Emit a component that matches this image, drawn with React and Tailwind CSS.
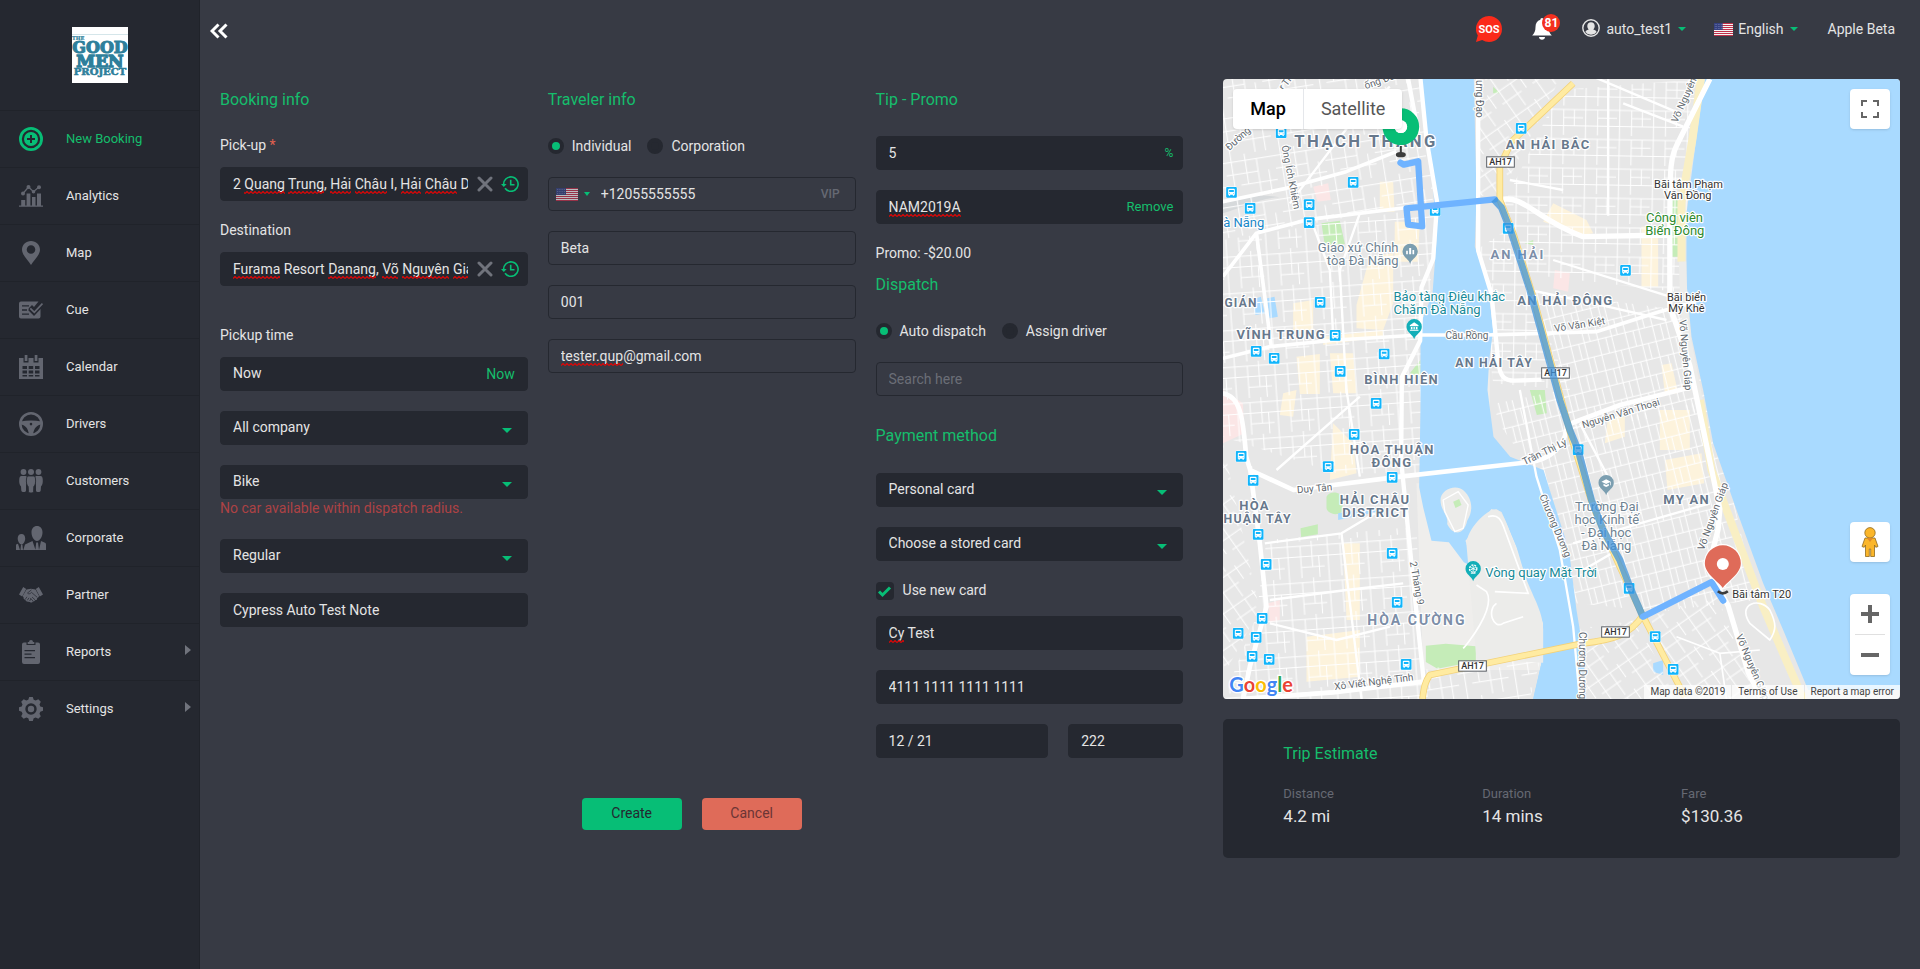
import React from "react";

/* ---------- sidebar icons ---------- */

const NewBookingIcon = () => (
  <svg viewBox="0 0 24 24" className="size-6 fill-current">
    <circle cx="12" cy="12" r="10.6" fill="none" stroke="currentColor" strokeWidth="2.8" />
    <path fillRule="evenodd" d="M12 5a7 7 0 1 0 0 14a7 7 0 1 0 0-14zM11 8h2v3h3v2h-3v3h-2v-3H8v-2h3z" />
  </svg>
);
const AnalyticsIcon = () => (
  <svg viewBox="0 0 24 24" className="size-6 fill-current">
    <path d="M0 21.5h24v1.2H0zM2.2 16h4v5.5h-4zM7.6 9.500h3.800v12H7.600zM13 13h3.500v8.500H13zM18 9.500h4v12h-4z" />
    <path d="M4 9.500L9.500 3l5 4.800L20 3" fill="none" stroke="currentColor" strokeWidth="1.200" />
    <circle cx="4" cy="9.500" r="2" />
    <circle cx="9.500" cy="3" r="2" />
    <circle cx="14.500" cy="7.800" r="1.800" />
    <circle cx="20" cy="3.200" r="2" />
  </svg>
);
const MapIcon = () => (
  <svg viewBox="0 0 24 24" className="size-6 fill-current">
    <path fillRule="evenodd" d="M12 0c5 0 9 3.800 9 8.800C21 14 15 19 12 24C9 19 3 14 3 8.800C3 3.800 7 0 12 0zM12 4.200a4.300 4.300 0 1 0 0 8.600a4.300 4.300 0 1 0 0-8.600z" />
  </svg>
);
const CueIcon = () => (
  <svg viewBox="0 0 24 24" className="size-6 fill-current">
    <path d="M2 3.500h17.500L15 9l-2-2l-3.500 3.500l6 6.500L21.500 10v8.500a2 2 0 0 1-2 2H2a2 2 0 0 1-2-2v-13a2 2 0 0 1 2-2z" />
    <path d="M3 7.800h7M3 12h5M3 16.200h7" stroke="#252830" strokeWidth="1.300" fill="none" />
    <path d="M10.500 10.500l4.500 4.700L23.500 6" fill="none" stroke="#252830" strokeWidth="4" />
    <path d="M11.300 10.300l4 4L23.500 5.500" fill="none" stroke="currentColor" strokeWidth="1.800" />
  </svg>
);
const CalendarIcon = () => (
  <svg viewBox="0 0 24 24" className="size-6 fill-current">
    <path fillRule="evenodd" d="M0 3h4.500v4.500h5V3h5v4.500h5V3H24v21H0zM3.500 11h4.500v3H3.500zM9.700 11h4.500v3H9.700zM16 11h4.500v3H16zM3.500 15.500h4.500v3H3.500zM9.700 15.500h4.500v3H9.700zM16 15.500h4.500v3H16zM3.500 20h4.500v1.500H3.500zM9.700 20h4.500v1.500H9.700zM16 20h4.500v1.500H16z" />
    <path d="M5.700 0h2.700v6H5.700zM15.700 0h2.700v6h-2.700z" />
  </svg>
);
const DriversIcon = () => (
  <svg viewBox="0 0 24 24" className="size-6 fill-current">
    <circle cx="12" cy="12" r="10.700" fill="none" stroke="currentColor" strokeWidth="2.600" />
    <path fillRule="evenodd" d="M1.500 9.500C8 8 16 8 22.500 9.500v3C18 13 15 16 14 22.500h-4C9 16 6 13 1.500 12.500zM12 10.800a1.300 1.300 0 1 0 0 2.600a1.300 1.300 0 1 0 0-2.600z" />
    <path d="M5 14.500c2 1.200 3 3 3.400 5C6.500 18.500 5.300 16.700 5 14.500zM19 14.500c-2 1.200-3 3-3.400 5c1.900-1 3.100-2.800 3.400-5z" fill="#252830" />
  </svg>
);
const CustomersIcon = () => (
  <svg viewBox="0 0 24 24" className="size-6 fill-current">
    <circle cx="4.500" cy="3" r="2.900" />
    <circle cx="19.500" cy="3" r="2.900" />
    <path d="M2.500 7h4.200c1 0 1.300 1 1 2L7 13v8.500c0 2-4.500 2-4.700 0L2 17.500C.3 16 0 13 .3 10C.5 8 1 7 2.500 7zM21.500 7h-4.200c-1 0-1.300 1-1 2l.7 4v8.500c0 2 4.500 2 4.700 0l.3-4c1.700-1.500 2-4.500 1.700-7.500c-.2-2-.7-3-2.200-3z" />
    <path d="M9.700 7h4.600c1.400 0 2 1.200 2.200 3c.3 3 0 6-1.700 7.500l-.3 5c-.2 2-4.800 2-5 0l-.3-5C7.500 16 7.200 13 7.500 10c.2-1.800.8-3 2.200-3z" stroke="#252830" strokeWidth=".8" />
    <circle cx="12" cy="3" r="3" />
  </svg>
);
const CorporateIcon = () => (
  <svg viewBox="0 0 30 24" className="h-6 w-[30px] fill-current">
    <path d="M21 0c3.300 0 5.500 2.500 5.500 6.500S24 15 21 15s-5.500-4.500-5.500-8.500S17.700 0 21 0zM5.500 8C8 8 9.200 9.800 9.200 12.500S7.500 18.500 5.500 18.500S1.700 15.200 1.700 12.500S3 8 5.500 8z" />
    <path d="M0 24v-5c0-.7 1-1 2-1.300L4 24zM5 18.500h1.400l.6 5.500H4.500zM7.300 24l1.700-5.500l7.500-3.500l3 9zM20.200 16.500h1.800L23 24h-3.600zM23 24l2-9l4 1.800c.7.400 1 1 1 2V24z" />
  </svg>
);
const PartnerIcon = () => (
  <svg viewBox="0 0 24 24" className="size-6 fill-current">
    <path d="M4.200 4L0 11.500l3.200 2L7.200 6zM19.800 4L24 11.500l-3.200 2L16.800 6z" />
    <path d="M7.500 6.500L12 5.800l4.500.7l3.600 6.500c-.8 1.500-1.500 2-2.100 2.500c.3 1.300-.8 2-1.900 1.600c-.2 1.200-1.200 1.600-2.200 1.200c-.3 1.200-1.800 1.700-3.100.7l-3-.5c-1-.5-1.600-1.200-1.300-2c-1.300.2-2.200-.8-1.800-1.800l-1-1.700z" />
    <path d="M12.500 6.800L8.500 10c.8 1.300 2.600 1 4-.6l5.800 5M8 13.800l-1.700 2.400M10 14.800l-1.700 2.500M12 15.800L10.600 18M13 14l3 2.800M11.200 15l2.800 3" fill="none" stroke="#252830" strokeWidth=".7" />
  </svg>
);
const ReportsIcon = () => (
  <svg viewBox="0 0 24 24" className="size-6 fill-current">
    <path d="M5 2.500h2.500V5h9V2.500H19a2 2 0 0 1 2 2V22a2 2 0 0 1-2 2H5a2 2 0 0 1-2-2V4.500a2 2 0 0 1 2-2z" />
    <path d="M8.700 2H10a2 2 0 0 1 4 0h1.300v2H8.700z" />
    <path d="M5.500 10.700H16M5.500 14.200h7M5.500 17.700H16" stroke="#252830" strokeWidth="1.200" fill="none" />
  </svg>
);
const SettingsIcon = () => (
  <svg viewBox="0 0 24 24" className="size-6 fill-current">
    <path
      fillRule="evenodd"
      d="M10.200 0h3.600l.9 2.800l2 .8l2.600-1.300l2.500 2.500l-1.300 2.600l.8 2l2.700.9v3.500l-2.700.9l-.8 2l1.300 2.600l-2.500 2.500l-2.600-1.300l-2 .8l-.9 2.700h-3.600l-.9-2.700l-2-.8l-2.600 1.300l-2.500-2.500l1.300-2.600l-.8-2L0 13.800v-3.500l2.700-.9l.8-2L2.200 4.800l2.500-2.500l2.600 1.300l2-.8zM12 6.300a5.700 5.700 0 1 0 0 11.400a5.700 5.700 0 1 0 0-11.400z"
    />
    <circle cx="12" cy="12" r="3.200" />
  </svg>
);

const NAV = [
  { label: "New Booking", Icon: NewBookingIcon, active: true },
  { label: "Analytics", Icon: AnalyticsIcon },
  { label: "Map", Icon: MapIcon },
  { label: "Cue", Icon: CueIcon },
  { label: "Calendar", Icon: CalendarIcon },
  { label: "Drivers", Icon: DriversIcon },
  { label: "Customers", Icon: CustomersIcon },
  { label: "Corporate", Icon: CorporateIcon },
  { label: "Partner", Icon: PartnerIcon },
  { label: "Reports", Icon: ReportsIcon, more: true },
  { label: "Settings", Icon: SettingsIcon, more: true },
];

function BrandLogo() {
  return (
    <svg viewBox="0 0 56 56" className="size-14 bg-white fill-[#2e7f9b] stroke-[#2e7f9b] font-['DejaVu_Serif'] font-bold">
      <path d="M0 7.500h56" className="stroke-[#d5e6ea]" strokeWidth="1" />
      <text x="0" y="12.500" fontSize="5" strokeWidth=".2">THE</text>
      <text x="28" y="25.500" fontSize="16" textAnchor="middle" strokeWidth="1.100">GOOD</text>
      <text x="28" y="39.500" fontSize="17" textAnchor="middle" strokeWidth="1.300">MEN</text>
      <text x="28" y="48" fontSize="10" textAnchor="middle" strokeWidth=".6">PROJECT</text>
    </svg>
  );
}

function Sidebar() {
  return (
    <aside className="w-[200px] shrink-0 border-r border-[#20232a] bg-[#252830]">
      <div className="flex h-[110px] justify-center pt-[27px]">
        <BrandLogo />
      </div>
      <nav>
        {NAV.map(({ label, Icon, active, more }) => (
          <a
            key={label}
            href="#"
            className={`flex h-[57px] items-center border-t border-[#20232a] pr-2 text-[13px] ${
              active ? "text-[#15be6c]" : "text-[#e4e4e4]"
            }`}
          >
            <span className={`flex w-[62px] shrink-0 justify-center ${active ? "text-[#07be76]" : "text-[#636670]"}`}>
              <Icon />
            </span>
            <span className="ml-1 grow">{label}</span>
            {more && (
              <svg viewBox="0 0 6 10" className="mb-1 h-2.5 w-1.5 fill-[#70737c]">
                <path d="M0 0l6 5l-6 5z" />
              </svg>
            )}
          </a>
        ))}
      </nav>
    </aside>
  );
}

/* ---------- header ---------- */

const STRIPES = [0, 2, 4, 6, 8, 10, 12];

function UsFlag({ className }) {
  return (
    <svg viewBox="0 0 22 13" preserveAspectRatio="none" className={className}>
      <path d="M0 0h22v13H0z" fill="#f4f4f4" />
      {STRIPES.map((y) => (
        <path key={y} d={`M0 ${y}h22v1H0z`} fill="#c0304a" />
      ))}
      <path d="M0 0h10v7H0z" fill="#34407f" />
      <path d="M1 1.500h8M1 3.500h8M1 5.500h8" stroke="#9aa3cc" strokeWidth=".6" strokeDasharray=".8 1" />
    </svg>
  );
}

const SmallCaret = () => (
  <svg viewBox="0 0 8 4" className="h-1 w-2 fill-[#07be76]">
    <path d="M0 0h8L4 4z" />
  </svg>
);

function Header() {
  return (
    <header className="flex h-[59px] items-start justify-between pr-[25px] pl-2.5">
      <button type="button" aria-label="Collapse menu" className="mt-[23px]">
        <svg viewBox="0 0 18 16" className="h-4 w-[18px]">
          <path d="M8.500 1.500L2 8l6.500 6.500M16.500 1.500L10 8l6.500 6.500" fill="none" stroke="#fff" strokeWidth="3" />
        </svg>
      </button>
      <div className="flex h-[58px] items-center text-sm text-[#e4e4e4]">
        <button type="button" aria-label="SOS" className="mr-[30px]">
          <svg viewBox="0 0 26 26" className="size-[26px]">
            <path d="M13 0a13 13 0 0 1 0 26c-2.500 0-4.800-.7-6.800-1.900L0 26l1.800-6.400A13 13 0 0 1 13 0z" fill="#fb2b1b" />
            <text x="13" y="17" fontSize="11" textAnchor="middle" className="fill-white font-['Roboto'] font-bold">
              SOS
            </text>
          </svg>
        </button>
        <button type="button" aria-label="Notifications" className="relative mr-[30px]">
          <svg viewBox="0 0 20 22" className="h-[22px] w-5 fill-white">
            <path d="M10 0c1 0 1.600.8 1.600 1.700C15 2.600 16.500 5.500 16.500 9c0 4 1 6 3.300 8.500H.2C2.500 15 3.500 13 3.500 9c0-3.500 1.500-6.400 4.900-7.300C8.400.8 9 0 10 0zM7 19h6c0 3.500-6 3.500-6 0z" />
          </svg>
          <span className="absolute -top-1 left-2.5 flex size-[18px] items-center justify-center rounded-full bg-[#f4301f] text-xs font-bold text-white">
            81
          </span>
        </button>
        <button type="button" className="mr-7 flex items-center">
          <svg viewBox="0 0 18 18" className="mr-1.5 mb-0.5 size-[18px]">
            <circle cx="9" cy="9" r="8.200" fill="none" stroke="#e4e4e4" strokeWidth="1.400" />
            <path d="M9 3.200c2.300 0 3.700 1.700 3.700 3.800c0 1.400-.6 2.700-1.400 3.500c2 .7 3 1.400 3.300 2.400A7 7 0 0 1 9 15.800a7 7 0 0 1-5.600-2.900c.3-1 1.300-1.700 3.300-2.400C5.900 9.700 5.300 8.400 5.300 7c0-2.100 1.400-3.800 3.700-3.800z" fill="#e4e4e4" />
          </svg>
          <span className="mr-1.5">auto_test1</span>
          <SmallCaret />
        </button>
        <button type="button" className="mr-[30px] flex items-center">
          <UsFlag className="mr-[5px] h-[13px] w-[19px]" />
          <span className="mr-1.5">English</span>
          <SmallCaret />
        </button>
        <span>Apple Beta</span>
      </div>
    </header>
  );
}

/* ---------- form controls ---------- */

const FILLED = "bg-[#252830] border border-[#252830]";
const OUTLINED = "border border-[#252830]";

/* Spelling marks, given as [start, width] pairs measured from the start of the text */
function SpellMarks({ marks }) {
  return (
    <svg aria-hidden="true" className="pointer-events-none absolute top-6 left-[13px] h-[3px] w-[240px]">
      <defs>
        <pattern id="squiggle" width="4" height="3" patternUnits="userSpaceOnUse">
          <path d="M0 2.500L2 .5L4 2.500" fill="none" stroke="#e00505" strokeWidth="1.200" />
        </pattern>
      </defs>
      {marks.map(([x, w]) => (
        <rect key={x} x={x} y="0" width={w} height="3" fill="url(#squiggle)" />
      ))}
    </svg>
  );
}

function Field({ id, label, value, placeholder, outlined, marks, pad = "pl-3 pr-3", children }) {
  return (
    <div className="relative">
      <input
        id={id}
        aria-label={label}
        type="text"
        spellCheck={false}
        defaultValue={value}
        placeholder={placeholder}
        className={`h-[34px] w-full rounded outline-none placeholder:text-[#6b6e77] ${pad} ${outlined ? OUTLINED : FILLED}`}
      />
      {marks && <SpellMarks marks={marks} />}
      {children}
    </div>
  );
}

function SelectField({ label, value }) {
  return (
    <div className="relative">
      <select
        aria-label={label}
        defaultValue={value}
        className={`h-[34px] w-full appearance-none rounded px-3 pb-0.5 outline-none ${FILLED}`}
      >
        <option>{value}</option>
      </select>
      <svg viewBox="0 0 10 5" className="pointer-events-none absolute top-[17px] right-4 h-[5px] w-2.5 fill-[#07be76]">
        <path d="M0 0h10L5 5z" />
      </svg>
    </div>
  );
}

function Radio({ name, label, checked }) {
  return (
    <label className="flex items-center gap-2">
      <input
        type="radio"
        name={name}
        defaultChecked={checked}
        className="size-4 appearance-none rounded-full border-4 border-[#252830] bg-[#252830] checked:bg-[#07be76]"
      />
      {label}
    </label>
  );
}

const Heading = ({ children }) => <h2 className="text-base leading-6 text-[#15be6c]">{children}</h2>;

function AddressActions({ what }) {
  return (
    <div className="absolute top-0 right-[9px] flex h-[34px] items-center gap-2">
      <button type="button" aria-label={`Clear ${what}`}>
        <svg viewBox="0 0 16 16" className="size-4">
          <path d="M2 2l12 12M14 2L2 14" stroke="#70737c" strokeWidth="3" strokeLinecap="round" />
        </svg>
      </button>
      <button type="button" aria-label={`Recent ${what}`}>
        <svg viewBox="0 0 18 16" className="h-4 w-[18px] fill-none stroke-[#07be76] stroke-[1.6]">
          <path d="M2.800 9.500A7.200 7.200 0 1 1 4 12.300" />
          <path d="M9.700 3.800v5h3.800" />
          <path d="M0 8h5.600L2.800 11z" className="fill-[#07be76] stroke-none" />
        </svg>
      </button>
    </div>
  );
}

function BookingInfo() {
  return (
    <section>
      <Heading>Booking info</Heading>
      <label htmlFor="pickup" className="mt-[23px] mb-3 block">
        Pick-up <span className="text-[#e2604f]">*</span>
      </label>
      <Field
        id="pickup"
        value="2 Quang Trung, Hải Châu I, Hải Châu District, Đà Nẵng"
        pad="pl-3 pr-[59px]"
        marks={[[11, 41], [55, 36], [97, 21], [122, 32], [168, 20], [192, 32]]}
      >
        <AddressActions what="pick-up" />
      </Field>
      <label htmlFor="destination" className="mt-[19px] mb-3 block">Destination</label>
      <Field
        id="destination"
        value="Furama Resort Danang, Võ Nguyên Giáp, Đà Nẵng"
        pad="pl-3 pr-[59px]"
        marks={[[0, 47], [95, 48], [149, 16], [169, 47], [220, 15]]}
      >
        <AddressActions what="destination" />
      </Field>
      <label htmlFor="pickup-time" className="mt-[39px] mb-3 block">Pickup time</label>
      <div className="flex flex-col gap-5">
        <Field id="pickup-time" value="Now" pad="pl-3 pr-14 pb-0.5">
          <button type="button" className="absolute top-[7px] right-[13px] leading-5 text-[#15be6c]">Now</button>
        </Field>
        <SelectField label="Company" value="All company" />
        <div>
          <SelectField label="Car type" value="Bike" />
          <p className="mb-0.5 leading-[18px] text-[#ad4244]">No car available within dispatch radius.</p>
        </div>
        <SelectField label="Service" value="Regular" />
        <Field label="Note" value="Cypress Auto Test Note" />
      </div>
    </section>
  );
}

function TravelerInfo() {
  return (
    <section>
      <Heading>Traveler info</Heading>
      <div className="mt-6 mb-[21px] flex gap-4">
        <Radio name="traveler" label="Individual" checked />
        <Radio name="traveler" label="Corporation" />
      </div>
      <div className="flex flex-col gap-5">
        <Field label="Phone number" value="+12055555555" outlined pad="pl-[52px] pr-12">
          <button type="button" aria-label="Country code" className="absolute top-0 left-2 flex h-[34px] items-center gap-1.5">
            <UsFlag className="h-[13px] w-[22px] opacity-70" />
            <svg viewBox="0 0 6 4" className="h-1 w-1.5 fill-[#07be76]">
              <path d="M0 0h6L3 4z" />
            </svg>
          </button>
          <span className="absolute top-[7px] right-4 text-xs leading-5 font-medium text-[#666973]">VIP</span>
        </Field>
        <Field label="First name" value="Beta" outlined />
        <Field label="Last name" value="001" outlined />
        <Field label="Email" value="tester.qup@gmail.com" outlined marks={[[0, 62]]} />
      </div>
    </section>
  );
}

function TipAndPayment() {
  return (
    <section>
      <Heading>Tip - Promo</Heading>
      <div className="mt-6 flex flex-col gap-5">
        <Field label="Tip" value="5">
          <span className="absolute top-[7px] right-2.5 text-xs leading-5 text-[#15be6c]">%</span>
        </Field>
        <Field label="Promo code" value="NAM2019A" pad="pl-3 pr-20" marks={[[0, 72]]}>
          <button type="button" className="absolute top-[7px] right-2.5 text-[13px] leading-5 text-[#15be6c]">Remove</button>
        </Field>
      </div>
      <p className="mt-[19px] mb-2.5">Promo: -$20.00</p>
      <Heading>Dispatch</Heading>
      <div className="mt-6 mb-[21px] flex gap-4">
        <Radio name="dispatch" label="Auto dispatch" checked />
        <Radio name="dispatch" label="Assign driver" />
      </div>
      <Field label="Driver" placeholder="Search here" outlined />
      <div className="mt-7">
        <Heading>Payment method</Heading>
      </div>
      <div className="mt-[25px] flex flex-col gap-5">
        <SelectField label="Payment method" value="Personal card" />
        <SelectField label="Stored card" value="Choose a stored card" />
      </div>
      <label className="mt-5 mb-[15px] flex items-center gap-[9px]">
        <span className="relative block size-[18px]">
          <input type="checkbox" defaultChecked className="block size-[18px] appearance-none rounded-sm bg-[#252830]" />
          <svg viewBox="0 0 18 18" className="pointer-events-none absolute inset-0 size-[18px]">
            <path d="M3 9.500l3.500 3.500L14 5.500" fill="none" stroke="#07be76" strokeWidth="3" />
          </svg>
        </span>
        <span className="leading-[18px] pb-0.5">Use new card</span>
      </label>
      <div className="flex flex-col gap-5">
        <Field label="Card holder" value="Cy Test" marks={[[0, 15]]} />
        <Field label="Card number" value="4111 1111 1111 1111" />
        <div className="grid grid-cols-[3fr_2fr] gap-5">
          <Field label="Expiry date" value="12 / 21" />
          <Field label="CVV" value="222" />
        </div>
      </div>
    </section>
  );
}

/* ---------- map ---------- */

const BUS_STOPS = [
  [214, 188], [65, 367], [121, 415], [298, 404], [430, 337], [298, 458], [676, 421], [895, 475], [934, 175],
  [331, 697], [376, 796], [139, 844], [193, 865], [391, 904], [523, 852], [1247, 601], [499, 1000], [433, 1093],
  [94, 1159], [355, 1190], [130, 1231], [547, 1222], [145, 1393], [169, 1483], [547, 1450], [562, 1597],
  [157, 1645], [85, 1690], [139, 1702], [127, 1759], [178, 1768], [589, 1783], [1105, 1139], [1258, 1555],
  [1336, 1700], [1390, 1798],
];

/* District names: x, y, text, size, colour, spacing class */
const DISTRICTS = [
  [253, 232, "THẠCH THANG", 50, "fill-[#67788c]", "tracking-[0.15em]"],
  [888, 236, "AN HẢI BẮC", 39, "fill-[#67788c]", "tracking-widest"],
  [842, 567, "AN HẢI", 39, "fill-[#7c8ea8]", "tracking-[0.15em]"],
  [922, 704, "AN HẢI ĐÔNG", 39, "fill-[#67788c]", "tracking-widest"],
  [44, 712, "GIÁN", 36, "fill-[#67788c]", "tracking-widest"],
  [80, 806, "VĨNH TRUNG", 39, "fill-[#67788c]", "tracking-widest"],
  [736, 890, "AN HẢI TÂY", 37, "fill-[#67788c]", "tracking-widest"],
  [463, 941, "BÌNH HIÊN", 39, "fill-[#67788c]", "tracking-widest"],
  [420, 1151, "HÒA THUẬN", 39, "fill-[#67788c]", "tracking-widest"],
  [485, 1190, "ĐÔNG", 39, "fill-[#67788c]", "tracking-widest"],
  [390, 1301, "HẢI CHÂU", 39, "fill-[#67788c]", "tracking-widest"],
  [397, 1340, "DISTRICT", 39, "fill-[#67788c]", "tracking-widest"],
  [88, 1319, "HÒA", 39, "fill-[#67788c]", "tracking-widest"],
  [41, 1358, "HUẬN TÂY", 37, "fill-[#67788c]", "tracking-widest"],
  [472, 1665, "HÒA CƯỜNG", 42, "fill-[#7c8ea8]", "tracking-[0.15em]"],
  [1360, 1302, "MY AN", 39, "fill-[#67788c]", "tracking-widest"],
];

/* Street names: x, y, angle, text */
const STREETS = [
  [58, 243, -42, "Đường"],
  [215, 70, -52, "ư Th"],
  [468, 58, -20, "ống Đa"],
  [215, 228, 79, "Ông Ích Khiêm"],
  [798, 30, 90, "ưng Đạo"],
  [707, 806, 0, "Cầu Rồng"],
  [1035, 786, -9, "Võ Văn Kiệt"],
  [1402, 160, -66, "Võ Nguyên"],
  [1408, 750, 85, "Võ Nguyên Giáp"],
  [944, 1186, -26, "Trần Thị Lý"],
  [988, 1278, 67, "Chương Dương"],
  [1108, 1686, 90, "Chương Dương"],
  [1120, 1075, -17, "Nguyễn Văn Thoại"],
  [600, 1476, 80, "2 Tháng 9"],
  [1482, 1442, -70, "Võ Nguyên Giáp"],
  [1578, 1698, 67, "Võ Nguyên Giáp"],
  [262, 1270, -5, "Duy Tân"],
  [375, 1860, -7, "Xô Viết Nghệ Tĩnh"],
];

/* Places: x, y, text, size, colour, anchor */
const PLACES = [
  [566, 546, "Giáo xứ Chính", 39, "fill-[#6f8392]", "end"],
  [566, 585, "tòa Đà Nẵng", 39, "fill-[#6f8392]", "end"],
  [40, 472, "à Nẵng", 39, "fill-[#1a87c8]", "start"],
  [551, 692, "Bảo tàng Điêu khắc", 39, "fill-[#178a98]", "start"],
  [551, 731, "Chăm Đà Nẵng", 39, "fill-[#178a98]", "start"],
  [826, 1520, "Vòng quay Mặt Trời", 39, "fill-[#178a98]", "start"],
  [1436, 353, "Bãi tắm Phạm", 33, "fill-[#333]", "middle"],
  [1434, 387, "Văn Đồng", 33, "fill-[#333]", "middle"],
  [1394, 455, "Công viên", 39, "fill-[#2e8b2e]", "middle"],
  [1395, 494, "Biển Đông", 39, "fill-[#2e8b2e]", "middle"],
  [1430, 692, "Bãi biển", 33, "fill-[#333]", "middle"],
  [1430, 725, "Mỹ Khê", 33, "fill-[#333]", "middle"],
  [1191, 1324, "Trường Đại", 39, "fill-[#6f8392]", "middle"],
  [1191, 1363, "học Kinh tế", 39, "fill-[#6f8392]", "middle"],
  [1189, 1402, "- Đại học", 39, "fill-[#6f8392]", "middle"],
  [1190, 1441, "Đà Nẵng", 39, "fill-[#6f8392]", "middle"],
  [1567, 1583, "Bãi tắm T20", 33, "fill-[#333]", "start"],
];

const SHIELDS = [[829, 259], [994, 892], [745, 1771], [1174, 1669]];

const CREAM_BLOCKS = [
  "M510 335h40l4 90h-44zM555 455h75l-6 120h-70z",
  "M480 560l70-10v150l-30 80l-80-5v-70z",
  "M250 700l60-10v90l-60 5zM360 850h70l10 120h-70z",
  "M340 800l180-20v20l-180 25zM260 860l70-8v120h-60z",
  "M370 1060l60 60l10 90l-80 20zM400 1420h50v230h-40z",
  "M290 1700l160-20v140l-160 15zM220 970l40-10l-10 80l-40-5z",
  "M1030 400l100 50l20 40l-30 5l-120-40zM1295 470h50v180h-50z",
  "M1350 1020h90v120h-90zM1365 1170l110-20l8 90l-110 20z",
  "M1195 1040h50v60l-60 20zM1355 885l30-5l20 90h-40z",
];

function StreetPattern({ id, angle, w, h, lines }) {
  return (
    <pattern id={id} width={w} height={h} patternUnits="userSpaceOnUse" patternTransform={`rotate(${angle})`}>
      <path d={lines} fill="none" stroke="#fff" strokeWidth="3" />
    </pattern>
  );
}

function BusStop({ x, y }) {
  return (
    <g transform={`translate(${x - 16} ${y - 16})`}>
      <rect x="-1.500" y="-1.500" width="35" height="35" rx="5" fill="#fff" />
      <rect width="32" height="32" rx="3" fill="#12b5fb" />
      <path fillRule="evenodd" d="M9 5h14a3 3 0 0 1 3 3v15h-2v3h-4v-3h-8v3H8v-3H6V8a3 3 0 0 1 3-3zM9 9v6h14V9zM8.500 18.500v2h3v-2zM20.500 18.500v2h3v-2z" fill="#fff" />
    </g>
  );
}

function PlacePin({ x, y, color, children }) {
  return (
    <g transform={`translate(${x} ${y})`}>
      <path d="M0 38C-4 22-23 18-23 0a23 23 0 0 1 46 0C23 18 4 22 0 38z" fill={color} />
      {children}
    </g>
  );
}

function MapCanvas() {
  return (
    <svg viewBox="39 27 2031 1860" preserveAspectRatio="xMidYMid slice" className="size-full font-['Roboto']">
      <defs>
        <StreetPattern id="st-a" angle={-9} w={150} h={132} lines="M0 20H150M0 58H96M40 92H150M20 0V132M62 0V92M96 20V132M128 58V150" />
        <StreetPattern id="st-b" angle={-4} w={120} h={110} lines="M0 14H120M0 46H120M50 78H120M12 0V110M50 14V110M84 0V78M104 46V110" />
        <StreetPattern id="st-c" angle={1} w={102} h={88} lines="M0 12H102M44 36H102M0 60H102M8 0V88M44 12V88M76 12V60" />
        <StreetPattern id="st-d" angle={-14} w={84} h={96} lines="M0 10H84M0 58H84M10 0V96M34 10V58M52 0V96M70 58V96M70 0V10" />
        <StreetPattern id="st-e" angle={-35} w={110} h={90} lines="M0 10H110M0 48H70M14 0V90M56 10V90M88 0V48" />
      </defs>

      {/* land */}
      <path d="M39 27h2031v1860H39z" fill="#e7e7e7" />
      <path d="M700 900h140v300H700zM620 1240h150l250 260v300H640z" fill="#efeeec" />
      <path d="M39 960l60 40l5 90l-65 30zM310 350l45-10l8 50l-40 5zM1035 600l45 10l-5 55l-45-10zM175 1600l35-10v60l-30 8z" fill="#fbe6e6" />
      {CREAM_BLOCKS.map((d) => (
        <path key={d} d={d} fill="#fdf3dc" />
      ))}
      <path d="M335 460l55-8l15 70l-60 5zM350 1280c10-20 50-15 48 10v35c-20 15-45 5-48-10zM272 1375l52-12v30l-50 8zM648 1727l60-6l90 8v45l-115 22l-35-20zM960 960h45l6 70l-30 5zM915 1660h25v45h-20zM600 910l32-40v50zM945 520l25-10v15zM850 50l20 20h-20zM1385 370h22l10 190h-30z" fill="#c5ecb8" />
      <path d="M125 690l28-10l12 50l-28 5zM172 685l22-5l10 60l-25 5zM385 1330l120-20v15l-120 25zM1330 1780l30-10v45l-30-10z" fill="#a9daff" />
      <path d="M39 400c60-20 110-30 170-18c-50 0-110 30-170 48z" fill="#d6d9db" />

      {/* minor streets */}
      <path d="M39 27h600l35 370l-635 110z" fill="url(#st-a)" />
      <path d="M39 510l635-100l-40 800H380L39 1100z" fill="url(#st-b)" />
      <path d="M170 1410l450-40l20 520H39l100-250z" fill="url(#st-b)" />
      <path d="M39 1120l110 500l-110 200z" fill="url(#st-e)" />
      <path d="M640 1800l360-60l-40 147H640z" fill="url(#st-a)" />
      <path d="M810 27h240l-180 350h-70z" fill="url(#st-e)" />
      <path d="M1050 60l420-33l-60 640l-500-60l-30-200z" fill="url(#st-c)" />
      <path d="M800 540l90-60l190 480l-230-20z" fill="url(#st-c)" />
      <path d="M950 660l460 60l90 300l-420 60z" fill="url(#st-d)" />
      <path d="M860 1000l200-40l240 660l-200-20l-100-350l-140-200z" fill="url(#st-d)" />
      <path d="M1100 1070l400-80l140 600l-340 40z" fill="url(#st-d)" />
      <path d="M1080 1680l200-30l120 237H1100zM1320 1640l200-70l120 317h-220z" fill="url(#st-e)" />

      {/* water */}
      <path
        d="M632 27h160l8 350l-5 153l38 110l17 140l-12 90l-5 90l18 140l50 60l100 40l22 70l45 140l12 150l20 120l10 207H970l30-130V1660l-45-110l-35-120l-45-105l-30-8l-78 95l25 80l-30-15l-45-60l-52-5l-25-100l-12-60l4-240v-250l36-90l12-160l-10-160z"
        fill="#a9daff"
      />
      <path d="M950 1200l60 100l70 160l20 160l20 120l10 147H970l30-130V1660l-60-180l-60-150l-130-130z" fill="#a9daff" />
      <path d="M692 1290c0-30 45-50 70-28c25 22 30 60 10 90c-8 40-40 50-60 10c5-25-20-40-20-72zM770 1425c0-50 65-110 90-107c30 10 50 110 80 180c20 70 60 120 60 180v100l-200-10z" fill="#ececea" />
      <path d="M730 1295l18-8l7 18l-18 9z" fill="#c5ecb8" />
      <path d="M700 1290l45-25l30 40l-15 70l-25 10l-30-60z" fill="none" stroke="#fff" strokeWidth="4" />
      <path d="M835 1340c30-10 40 10 50 40l70 190l-100-5M800 1545l30 20c30 50-60 160-70 170M860 1600c-30 20-10 80 20 60l60-20" fill="none" stroke="#fff" strokeWidth="5" />
      <path d="M1485 27L1460 200l-30 230v210l15 160l35 160l30 160l70 200l80 220l60 140l75 180h350V27z" fill="#a9daff" />
      <path
        d="M1473 27l-25 180l-33 190l0 178M1470 990l35 210l75 200l80 210l60 140l70 160"
        fill="none"
        stroke="#f9efc4"
        strokeWidth="24"
      />
      <path d="M1418 575l4 120l12 120l34 175" fill="none" stroke="#ececea" strokeWidth="22" />

      {/* main streets */}
      <g fill="none" stroke="#fff" strokeLinejoin="round">
        <path strokeWidth="11" d="M39 395l190-40l180-50l150-60M39 620l100-130l160-42l330-40M140 490l45 345M39 865l140-35l200-20l250-15h200l330-10l190-60l110-30" />
        <path strokeWidth="13" d="M632 27l18 180l32 190l-12 170l-35 85l-4 160l-55 110l-2 250l38 380l35 330M595 27l30 160M805 27v515l40 130l20 200c5 50 20 60 50 60l80-3" />
        <path strokeWidth="14" d="M39 970c50 10 60 60 70 190l12 40l130 60l320-40l400-45c90-20 100-90 100-110l160-60l200-50M120 1190l30 230l20 190l-50 180l-20 97l270-20l270-32" />
        <path strokeWidth="16" d="M870 390c70-20 110 60 250 110l260-5M1500 27l-90 180c-30 60-30 60-30 300v200l60 180l40 190l50 240l-5 60l-30 120l60 110l60 200l60 120" />
        <path strokeWidth="7" d="M240 400l190-250l110-100M200 1200l250-220M165 1420l230-30l100-60M180 1590l230-30l170-20M300 440l60 160l10 200M450 430l-60 170l20 370M410 960l40 260M395 1390l60 497M180 1660l200 50l160-40" />
        <path strokeWidth="7" d="M930 960l50 260l70 220l40 230l20 217M1195 27v410M900 330l160 30M960 660l190 40l220 50M1090 1420l200-60l210-60M1120 1500l120-70M1110 1060l90 170M1240 100l180 70M1150 20l260 110M1380 680l-350-110" />
        <path strokeWidth="5" d="M1620 1660c-40-60 30-80 60-40c20 40 20 60 0 90zM1400 1700l130 50l120-10M1530 1750l20 137" />
      </g>

      {/* highway */}
      <g fill="none" strokeLinejoin="round">
        <path d="M1090 40L905 215L870 290v100l40 100l60 190l120 440l60 190l80 180l65 140l130 250M1300 1635c-40 60-90 75-180 85l-460 95c-15 20-18 40-22 72" stroke="#f3d27a" strokeWidth="20" />
        <path d="M1090 40L905 215L870 290v100l40 100l60 190l120 440l60 190l80 180l65 140l130 250M1300 1635c-40 60-90 75-180 85l-460 95c-15 20-18 40-22 72" stroke="#ffeba1" strokeWidth="15" />
      </g>

      {BUS_STOPS.map(([x, y]) => (
        <BusStop key={`${x}-${y}`} x={x} y={y} />
      ))}

      {SHIELDS.map(([x, y]) => (
        <g key={`${x}-${y}`}>
          <rect x={x + 1.500} y={y + 1.500} width="83" height="31" fill="#fff" stroke="#5c6066" strokeWidth="3" />
          <text x={x + 43} y={y + 27} fontSize="27" textAnchor="middle" className="fill-[#333] font-medium">AH17</text>
        </g>
      ))}

      <g stroke="#fff" strokeWidth="7" strokeLinejoin="round" className="[paint-order:stroke]">
        {DISTRICTS.map(([x, y, text, size, color, spacing]) => (
          <text key={text + y} x={x} y={y} fontSize={size} className={`font-bold ${color} ${spacing}`}>{text}</text>
        ))}
        {STREETS.map(([x, y, angle, text]) => (
          <text key={`${text}-${x}`} x={x} y={y} fontSize="30" transform={`rotate(${angle} ${x} ${y})`} className="fill-[#62696f]">
            {text}
          </text>
        ))}
        {PLACES.map(([x, y, text, size, color, anchor]) => (
          <text key={text} x={x} y={y} fontSize={size} textAnchor={anchor} className={color}>{text}</text>
        ))}
      </g>

      <PlacePin x={601} y={544} color="#7b9eb0">
        <path d="M-12-2h5V9h-5zM-3-10h6V9h-6zM7-4h5V9H7z" fill="#fff" />
      </PlacePin>
      <PlacePin x={613} y={770} color="#12aeb8">
        <path d="M-13-4L0-13L13-4v3h-26zM-10 1h5v7h-5zM-2 1h4v7h-4zM5 1h5v7H5zM-13 9h26v3h-26z" fill="#fff" />
      </PlacePin>
      <PlacePin x={790} y={1496} color="#12aeb8">
        <circle r="11" fill="none" stroke="#fff" strokeWidth="4" strokeDasharray="6 3" />
        <path d="M0-9V12M-8-4L8 4M8-4L-8 4M-7 14H7" stroke="#fff" strokeWidth="2.500" />
      </PlacePin>
      <PlacePin x={1189} y={1238} color="#7b9eb0">
        <path d="M0-10L14-3L0 4L-14-3zM-8 3L0 7L8 3v6L0 13L-8 9zM12-2h2v10h-2z" fill="#fff" />
      </PlacePin>

      {/* route */}
      <g fill="none" strokeLinejoin="round" strokeLinecap="round" strokeWidth="19">
        <path d="M572 278l10 6l43-10l12 195l-42-5l-5-49l50-5l215-22" stroke="#6fb3ff" />
        <path d="M852 388l23 25l30 77l55 170l90 330l30 90l25 60l40 150l35 90l50 90l30 80l40 92" stroke="#3f93da" strokeOpacity=".75" strokeLinecap="butt" strokeWidth="21" />
        <path d="M1300 1640l205-104l35 56" stroke="#6fb3ff" />
      </g>

      {/* pick-up marker */}
      <path d="M573 228v22" stroke="#3c3c3c" strokeWidth="6" />
      <ellipse cx="573" cy="254" rx="15" ry="8" fill="#3c3c3c" />
      <circle cx="573" cy="170" r="37" fill="none" stroke="#07be76" strokeWidth="36" />
      <circle cx="573" cy="170" r="19" fill="#fff" />

      {/* drop-off marker */}
      <path d="M1524 1564q15 12 30 0" fill="none" stroke="#3c3c3c" strokeWidth="8" />
      <path d="M1539 1559c-12-20-57-45-57-80a57 57 0 0 1 114 0c0 35-45 60-57 80z" fill="#fff" />
      <path d="M1539 1554c-12-18-54-42-54-74a54 54 0 0 1 108 0c0 32-42 56-54 74z" fill="#df6b59" />
      <circle cx="1539" cy="1482" r="18" fill="#fff" />

      <text x="58" y="1865" fontSize="60" stroke="#fff" strokeWidth="8" className="font-['Lato'] font-bold [paint-order:stroke]">
        <tspan fill="#4285f4">G</tspan>
        <tspan fill="#ea4335">o</tspan>
        <tspan fill="#fbbc05">o</tspan>
        <tspan fill="#4285f4">g</tspan>
        <tspan fill="#34a853">l</tspan>
        <tspan fill="#ea4335">e</tspan>
      </text>
    </svg>
  );
}

function TripMap() {
  const box = "absolute right-2.5 flex w-10 items-center justify-center rounded-sm bg-white shadow";
  return (
    <div className="relative h-[620px] overflow-hidden rounded">
      <MapCanvas />
      <div className="absolute top-2.5 left-2.5 flex h-10 rounded-sm bg-white text-lg shadow">
        <button type="button" className="border-r border-gray-200 px-[17px] font-medium text-black">Map</button>
        <button type="button" className="px-[17px] text-[#565656]">Satellite</button>
      </div>
      <button type="button" aria-label="Full screen" className={`${box} top-2.5 h-10`}>
        <svg viewBox="0 0 18 18" className="size-[18px]">
          <path d="M1 6V1h5M12 1h5v5M17 12v5h-5M6 17H1v-5" fill="none" stroke="#666" strokeWidth="2" />
        </svg>
      </button>
      <button type="button" aria-label="Street View" className={`${box} bottom-[137px] h-10`}>
        <svg viewBox="0 0 18 30" className="h-[30px] w-[18px]" stroke="#8f6a20" strokeWidth=".8">
          <path d="M4 11h10l3 8.500l-2.200.8L13.500 18v11.500H9.700V22H8.300v7.500H4.500V18l-1.300 2.300L1 19.500z" fill="#fbb62a" />
          <circle cx="9" cy="5.800" r="5.200" fill="#fbb62a" />
          <path d="M6 11h6l-3 4z" fill="#e0892a" stroke="none" />
        </svg>
      </button>
      <div className={`${box} bottom-6 h-[81px] flex-col`}>
        <button type="button" aria-label="Zoom in" className="flex h-10 w-10 items-center justify-center">
          <svg viewBox="0 0 18 18" className="size-[18px] fill-[#666]"><path d="M7 0h4v7h7v4h-7v7H7v-7H0V7h7z" /></svg>
        </button>
        <div className="h-px w-[30px] bg-[#e0e0e0]" />
        <button type="button" aria-label="Zoom out" className="flex h-10 w-10 items-center justify-center">
          <svg viewBox="0 0 18 4" className="h-1 w-[18px] fill-[#666]"><path d="M0 0h18v4H0z" /></svg>
        </button>
      </div>
      <div className="absolute right-0 bottom-0 flex gap-px text-[10px] leading-[14px] text-[#444]">
        <span className="bg-white/75 px-1.5">Map data ©2019</span>
        <a href="#" className="bg-white/75 px-1.5">Terms of Use</a>
        <a href="#" className="bg-white/75 px-1.5">Report a map error</a>
      </div>
    </div>
  );
}

const ESTIMATES = [
  ["Distance", "4.2 mi"],
  ["Duration", "14 mins"],
  ["Fare", "$130.36"],
];

function TripEstimate() {
  return (
    <section className="mt-5 rounded-[5px] bg-[#252830] px-10 pt-[23px] pb-[30px]">
      <div className="px-5"><Heading>Trip Estimate</Heading></div>
      <dl className="mt-[18px] grid grid-cols-3">
        {ESTIMATES.map(([name, value]) => (
          <div key={name} className="px-5">
            <dt className="text-[13px] leading-5 text-[#666973]">{name}</dt>
            <dd className="text-[17px] leading-6 text-[#e4e4e4]">{value}</dd>
          </div>
        ))}
      </dl>
    </section>
  );
}

export default function App() {
  return (
    <div className="flex min-h-screen bg-[#373a44] font-['Roboto',sans-serif] text-[#e4e4e4]">
      <Sidebar />
      <div className="min-w-0 grow">
        <Header />
        <main className="grid grid-cols-12">
          <form className="col-span-7 px-5 pt-[29px] text-sm" onSubmit={(e) => e.preventDefault()}>
            <div className="grid grid-cols-3 gap-5">
              <BookingInfo />
              <TravelerInfo />
              <TipAndPayment />
            </div>
            <div className="mt-10 flex justify-center gap-5 pr-5">
              <button type="submit" className="h-8 w-[100px] rounded bg-[#07be76] pb-0.5 text-[#252830]">Create</button>
              <button type="button" className="h-8 w-[100px] rounded bg-[#df6b59] pb-0.5 text-[#6b3535]">Cancel</button>
            </div>
          </form>
          <div className="col-span-5 px-5 pt-5">
            <TripMap />
            <TripEstimate />
          </div>
        </main>
      </div>
    </div>
  );
}
